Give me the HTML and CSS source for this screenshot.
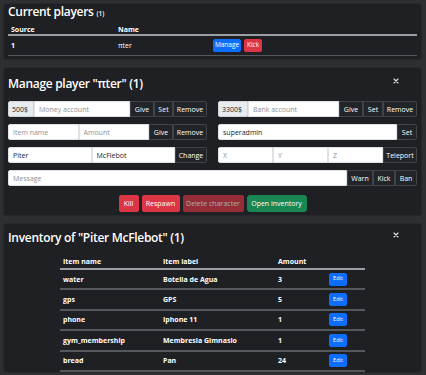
FILE: index.html
```html
<!DOCTYPE html>
<html lang="en">
<head>
<meta charset="utf-8">
<title>Admin menu</title>
<link rel="stylesheet" href="styles.css">
</head>
<body>
<div class="page">
  <section class="card card-players">
    <h2 class="title">Current players <small>(1)</small></h2>
    <table class="tbl players">
      <thead>
        <tr><th class="p-src">Source</th><th class="p-name">Name</th><th></th></tr>
      </thead>
      <tbody>
        <tr>
          <td class="bold">1</td>
          <td>πter</td>
          <td><div class="p-actions"><button class="btn sm blue w-manage">Manage</button><button class="btn sm red w-kick">Kick</button></div></td>
        </tr>
      </tbody>
    </table>
  </section>

  <section class="card card-manage">
    <div class="head">
      <h2 class="title">Manage player "πter" (1)</h2>
      <button class="close" aria-label="Close"><svg viewBox="0 0 6 6" width="6" height="6"><path d="M1 1L5 5M5 1L1 5" stroke="#e6e6e6" stroke-width="1.1" stroke-linecap="round"/></svg></button>
    </div>
    <div class="grid">
      <div class="ig">
        <span class="addon a-money">500$</span>
        <input class="in" placeholder="Money account">
        <button class="btn dk w-give">Give</button><button class="btn dk w-set">Set</button><button class="btn dk w-remove">Remove</button>
      </div>
      <div class="ig">
        <span class="addon a-bank">3300$</span>
        <input class="in" placeholder="Bank account">
        <button class="btn dk w-give">Give</button><button class="btn dk w-set2">Set</button><button class="btn dk w-remove">Remove</button>
      </div>
      <div class="ig">
        <input class="in" placeholder="Item name">
        <input class="in" placeholder="Amount">
        <button class="btn dk w-give">Give</button><button class="btn dk w-remove">Remove</button>
      </div>
      <div class="ig">
        <input class="in" value="superadmin">
        <button class="btn dk w-set2">Set</button>
      </div>
      <div class="ig">
        <input class="in" value="Piter">
        <input class="in" value="McFlebot">
        <button class="btn dk w-change">Change</button>
      </div>
      <div class="ig">
        <input class="in" placeholder="X">
        <input class="in" placeholder="Y">
        <input class="in" placeholder="Z">
        <button class="btn dk w-teleport">Teleport</button>
      </div>
      <div class="ig wide">
        <input class="in" placeholder="Message">
        <button class="btn dk w-warn">Warn</button><button class="btn dk w-kick2">Kick</button><button class="btn dk w-ban">Ban</button>
      </div>
    </div>
    <div class="actions">
      <button class="btn md red w-kill">Kill</button>
      <button class="btn md red w-respawn">Respawn</button>
      <button class="btn md red disabled w-delete">Delete character</button>
      <button class="btn md green w-open">Open inventory</button>
    </div>
  </section>

  <section class="card card-inv">
    <div class="head">
      <h2 class="title">Inventory of "Piter McFlebot" (1)</h2>
      <button class="close" aria-label="Close"><svg viewBox="0 0 6 6" width="6" height="6"><path d="M1 1L5 5M5 1L1 5" stroke="#e6e6e6" stroke-width="1.1" stroke-linecap="round"/></svg></button>
    </div>
    <table class="tbl inv">
      <thead>
        <tr><th class="i-name">Item name</th><th class="i-label">Item label</th><th class="i-amt">Amount</th><th></th></tr>
      </thead>
      <tbody>
        <tr><td>water</td><td>Botella de Agua</td><td>3</td><td><button class="btn xs blue">Edit</button></td></tr>
        <tr><td>gps</td><td>GPS</td><td>5</td><td><button class="btn xs blue">Edit</button></td></tr>
        <tr><td>phone</td><td>Iphone 11</td><td>1</td><td><button class="btn xs blue">Edit</button></td></tr>
        <tr><td>gym_membership</td><td>Membresia Gimnasio</td><td>1</td><td><button class="btn xs blue">Edit</button></td></tr>
        <tr><td>bread</td><td>Pan</td><td>24</td><td><button class="btn xs blue">Edit</button></td></tr>
      </tbody>
    </table>
  </section>
</div>
</body>
</html>
```

FILE: styles.css
```css
* { box-sizing: border-box; }
html, body { margin: 0; height: 100%; overflow: hidden; }
body {
  background: #2e2f31;
  font-family: "Open Sans", "Noto Sans", sans-serif;
  color: #fff;
}
.page {
  display: flex;
  flex-direction: column;
  gap: 7px;
  padding: 3px 4px 0 3px;
}
.card {
  background: #1f2023;
  border: 1px solid #27282b;
  border-radius: 3px;
  padding: 0 4px;
}
.title {
  margin: 0;
  font-size: 12px;
  font-weight: 600;
  line-height: 15px;
  letter-spacing: -0.3px;
}
.title small { font-size: 6.5px; font-weight: 600; letter-spacing: 0; }

.head {
  display: flex;
  justify-content: space-between;
  align-items: flex-start;
}
.close {
  background: none;
  border: 0;
  padding: 0;
  margin: 2px 18px 0 0;
  width: 6px;
  height: 6px;
  display: flex;
}

/* players card */
.card-players { padding-bottom: 3px; }
.card-players .title { margin-bottom: 3px; }
.tbl {
  border-collapse: separate;
  border-spacing: 0;
  font-size: 7px;
}
.tbl th {
  text-align: left;
  font-weight: 700;
  padding: 0 3px;
  border-bottom: 2px solid #9a9ea3;
}
.tbl td {
  padding: 0 3px;
  border-bottom: 1.5px solid #55595e;
}
.players { width: 100%; }
.players th { height: 12px; }
.players td { height: 20px; }
.p-src { width: 107px; }
.p-name { width: 95px; }
.bold { font-weight: 700; }
.p-actions { display: flex; gap: 3px; align-items: center; }

/* buttons */
.btn {
  font-family: inherit;
  color: #fff;
  border: 1px solid transparent;
  cursor: pointer;
  padding: 0;
  font-size: 7px;
  line-height: 1;
  white-space: nowrap;
}
.btn.sm { height: 13px; border-radius: 2px; font-size: 6.5px; }
.btn.md { height: 17px; border-radius: 2px; }
.btn.xs { height: 13px; width: 18px; font-size: 5.5px; border-radius: 2px; }
.w-manage { width: 28px; }
.w-kick { width: 18px; }
.blue { background: #0d6efd; border-color: #0d6efd; }
.red { background: #dc3545; border-color: #dc3545; }
.green { background: #198754; border-color: #198754; }
.btn.md.green { border-radius: 3px; }
.disabled { opacity: 0.62; }
.dk {
  background: #212529;
  border-color: #3f4448;
  border-radius: 0;
  height: 16px;
  flex: none;
}
.w-give { width: 24px; }
.w-set { width: 19px; }
.w-set2 { width: 20px; }
.w-remove { width: 34px; }
.w-change { width: 32px; }
.w-teleport { width: 34px; }
.w-warn { width: 26px; }
.w-kick2 { width: 22px; }
.w-ban { width: 22px; }
.w-kill { width: 20px; }
.w-respawn { width: 38px; }
.w-delete { width: 61px; }
.w-open { width: 60px; }

/* manage card */
.card-manage { padding-top: 8px; padding-bottom: 3px; }
.card-manage .head { margin-bottom: 10px; }
.grid {
  display: grid;
  grid-template-columns: 1fr 1fr;
  column-gap: 11px;
  row-gap: 7px;
}
.ig { display: flex; height: 16px; }
.ig.wide { grid-column: 1 / 3; }
.ig > :last-child { border-top-right-radius: 2px; border-bottom-right-radius: 2px; }
.ig > :first-child { border-top-left-radius: 2px; border-bottom-left-radius: 2px; }
.addon {
  background: #e9ecef;
  color: #212529;
  border: 1px solid #ced4da;
  font-size: 7px;
  display: flex;
  align-items: center;
  padding: 0 3px;
  flex: none;
}
.a-money { width: 26px; }
.a-bank { width: 30px; }
.in {
  flex: 1;
  min-width: 0;
  width: 0;
  height: 16px;
  border: 1px solid #dee2e6;
  background: #fff;
  color: #212529;
  font-family: inherit;
  font-size: 7px;
  padding: 0 4px;
  border-radius: 0;
  outline: none;
}
.in::placeholder { color: #8c9197; }
.actions {
  margin-top: 9px;
  display: flex;
  justify-content: center;
  gap: 3px;
}

/* inventory card */
.card-inv { padding-top: 6px; flex: 1; }
.card-inv .head { margin-bottom: 10px; }
.inv { width: 305px; margin: 0 auto; }
.inv th { height: 15px; }
.inv td { height: 20.4px; font-weight: 700; border-bottom: 2px solid #55595e; }
.i-name { width: 100px; }
.i-label { width: 115px; }
.i-amt { width: 50px; }
.inv td:last-child { padding-left: 4px; }
```
